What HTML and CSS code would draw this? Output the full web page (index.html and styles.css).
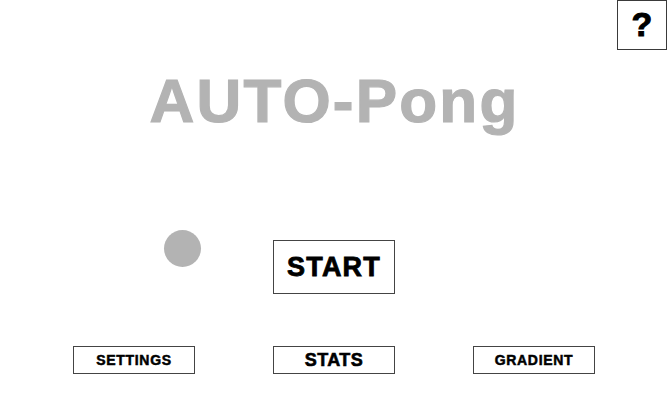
FILE: index.html
```html
<!DOCTYPE html>
<html>
<head>
<meta charset="utf-8">
<link rel="stylesheet" href="styles.css">
</head>
<body>
<div class="screen">
  <div class="topbar">
    <div class="help">?</div>
  </div>
  <h1 class="title">AUTO-Pong</h1>
  <div class="start-row">
    <div class="btn btn-start">START</div>
  </div>
  <div class="menu-row">
    <div class="btn btn-small">SETTINGS</div>
    <div class="btn btn-stats">STATS</div>
    <div class="btn btn-small">GRADIENT</div>
  </div>
  <div class="ball"></div>
</div>
</body>
</html>
```
FILE: styles.css
```css
html, body {
  margin: 0;
  padding: 0;
  background: #ffffff;
}
.screen {
  position: relative;
  width: 667px;
  height: 400px;
  display: flex;
  flex-direction: column;
  font-family: "Liberation Sans", Arial, sans-serif;
  font-weight: bold;
  color: #000;
  overflow: hidden;
}
.topbar {
  display: flex;
  justify-content: flex-end;
  height: 50px;
}
.help {
  box-sizing: border-box;
  width: 50px;
  height: 50px;
  border: 1px solid #3a3a3a;
  display: flex;
  align-items: center;
  justify-content: center;
  font-size: 34px;
  line-height: 1;
  padding-bottom: 2px;
  -webkit-text-stroke: 1px #000;
}
.title {
  margin: 20px 0 0 0;
  text-align: center;
  font-size: 62px;
  line-height: 62px;
  letter-spacing: 2.2px;
  padding-left: 2px;
  color: #b3b3b3;
  font-weight: bold;
  -webkit-text-stroke: 1.2px #b3b3b3;
}
.start-row {
  display: flex;
  padding-left: 273px;
  margin-top: 108px;
}
.btn {
  box-sizing: border-box;
  width: 122px;
  border: 1px solid #444;
  display: flex;
  align-items: center;
  justify-content: center;
  line-height: 1;
}
.btn-start {
  height: 54px;
  font-size: 27px;
  letter-spacing: 1.2px;
  padding-top: 1px;
  -webkit-text-stroke: 0.8px #000;
}
.menu-row {
  display: flex;
  padding-left: 73px;
  gap: 78px;
  margin-top: 52px;
}
.btn-small {
  height: 28px;
  font-size: 14px;
  letter-spacing: 0.7px;
  -webkit-text-stroke: 0.5px #000;
}
.btn-stats {
  height: 28px;
  font-size: 18px;
  letter-spacing: 0.4px;
  -webkit-text-stroke: 0.6px #000;
}
.ball {
  position: absolute;
  left: 164px;
  top: 230px;
  width: 37px;
  height: 37px;
  border-radius: 50%;
  background: #b3b3b3;
}
```
